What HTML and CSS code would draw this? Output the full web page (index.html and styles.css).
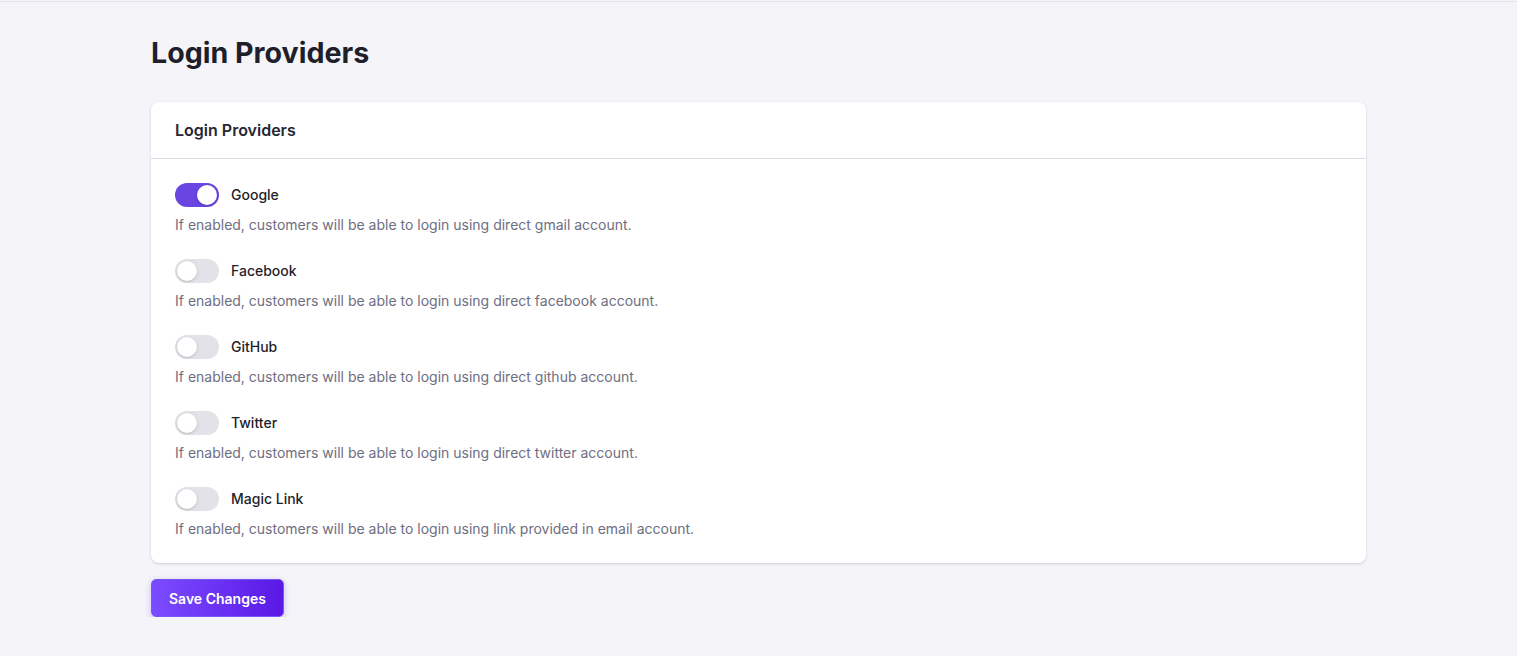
FILE: index.html
```html
<!DOCTYPE html>
<html lang="en">
<head>
<meta charset="utf-8">
<title>Login Providers</title>
<link rel="stylesheet" href="styles.css">
</head>
<body>
<div class="topline"></div>
<main class="page">
  <h1 class="page-title">Login Providers</h1>
  <section class="card">
    <header class="card-header">Login Providers</header>
    <div class="card-body">
      <div class="provider">
        <div class="provider-head">
          <span class="toggle on"><span class="knob"></span></span>
          <span class="label">Google</span>
        </div>
        <p class="desc">If enabled, customers will be able to login using direct gmail account.</p>
      </div>
      <div class="provider">
        <div class="provider-head">
          <span class="toggle"><span class="knob"></span></span>
          <span class="label">Facebook</span>
        </div>
        <p class="desc">If enabled, customers will be able to login using direct facebook account.</p>
      </div>
      <div class="provider">
        <div class="provider-head">
          <span class="toggle"><span class="knob"></span></span>
          <span class="label">GitHub</span>
        </div>
        <p class="desc">If enabled, customers will be able to login using direct github account.</p>
      </div>
      <div class="provider">
        <div class="provider-head">
          <span class="toggle"><span class="knob"></span></span>
          <span class="label">Twitter</span>
        </div>
        <p class="desc">If enabled, customers will be able to login using direct twitter account.</p>
      </div>
      <div class="provider">
        <div class="provider-head">
          <span class="toggle"><span class="knob"></span></span>
          <span class="label">Magic Link</span>
        </div>
        <p class="desc">If enabled, customers will be able to login using link provided in email account.</p>
      </div>
    </div>
  </section>
  <button class="btn-save" type="button">Save Changes</button>
</main>
</body>
</html>
```
FILE: styles.css
```css
* { box-sizing: border-box; }
html, body { margin: 0; padding: 0; }
body {
  background: #f4f4f9;
  font-family: Inter, "Noto Sans", "Liberation Sans", sans-serif;
  color: #1e1e2a;
}
.topline {
  height: 2px;
  border-top: 1px solid #f4f4f9;
  border-bottom: 1px solid #e2e2ea;
}
.page {
  max-width: 1215px;
  margin: 0 auto;
  padding-top: 33px;
}
.page-title {
  margin: 0 0 31px;
  font-size: 28.6px;
  line-height: 36px;
  font-weight: 700;
  letter-spacing: 0;
  color: #1f1f2b;
}
.card {
  background: #fff;
  border-radius: 8px;
  box-shadow: 0 1px 3px rgba(30, 30, 60, 0.12), 0 1px 2px rgba(30, 30, 60, 0.06);
}
.card-header {
  height: 57px;
  padding: 0 24px;
  display: flex;
  align-items: center;
  font-size: 16px;
  font-weight: 600;
  color: #262633;
  border-bottom: 1px solid #dcdce4;
}
.card-body {
  padding: 24px 24px 24px;
  display: flex;
  flex-direction: column;
  gap: 24px;
}
.provider {
  display: flex;
  flex-direction: column;
  gap: 8px;
}
.provider-head {
  display: flex;
  align-items: center;
  gap: 12px;
  height: 24px;
}
.toggle {
  width: 44px;
  height: 24px;
  border-radius: 12px;
  background: #e2e2e8;
  position: relative;
  flex: none;
}
.toggle .knob {
  position: absolute;
  top: 2px;
  left: 2px;
  width: 20px;
  height: 20px;
  border-radius: 50%;
  background: #fff;
  box-shadow: 0 1px 3px rgba(0, 0, 0, 0.2);
}
.toggle.on {
  background: #6a45e2;
}
.toggle.on .knob {
  left: 22px;
}
.label {
  font-size: 14px;
  line-height: 20px;
  margin-top: -1px;
  font-weight: 500;
  color: #1f1f2b;
}
.desc {
  margin: 0;
  font-size: 14px;
  line-height: 20px;
  color: #6e6e82;
}
.btn-save {
  margin-top: 16px;
  height: 38px;
  padding: 0 17px;
  border: 1px solid #7a55f5;
  border-radius: 5px;
  background: linear-gradient(90deg, #7b4cff 0%, #5a18e6 100%);
  color: #fff;
  font-family: inherit;
  font-size: 14px;
  font-weight: 600;
  box-shadow: 0 2px 6px rgba(100, 60, 230, 0.3);
  cursor: pointer;
}
```
